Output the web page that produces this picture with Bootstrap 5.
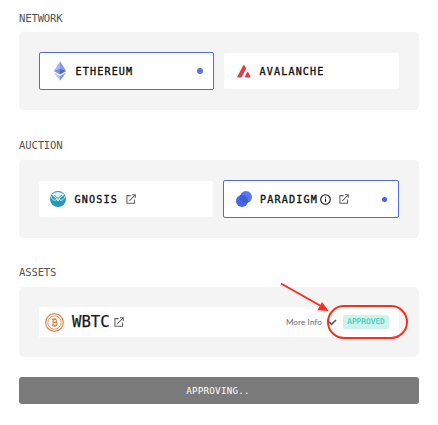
<!DOCTYPE html>
<html lang="en">
<head>
<meta charset="utf-8">
<meta name="viewport" content="width=device-width, initial-scale=1">
<title>Auction setup</title>
<link href="https://cdn.jsdelivr.net/npm/bootstrap@5.3.0/dist/css/bootstrap.min.css" rel="stylesheet">
<style>
body{font-family:"DejaVu Sans Mono","Liberation Mono",monospace;background:#fff;height:425px;overflow:hidden}
svg{display:block;flex:none}
.page{padding:0 19px;height:425px}
.field-title{font-size:10.6px;line-height:14px;letter-spacing:-.16px;color:#555;margin:0;font-weight:400;height:50px;padding-top:28px}
.field-title.first{height:32px;padding-top:11px}
.field-title.last{height:49px;padding-top:27px}
.panel{background:#f4f4f4;border-radius:5px;padding:20px}
.panel.assets{height:70px}
.choices{height:78px}
.choice{height:36px;width:174px;border-radius:2px;background:#fff;font-size:10.1px;letter-spacing:1.17px;color:#111;-webkit-text-stroke:.35px #111;line-height:14px;padding-left:11px}
.choice.chosen{height:38px;width:176px;border:1px solid #4f6de0}
.choice.avax{width:175px;padding-left:13px}
.choice.chosen.eth{width:175px;padding-left:13px}
.choice.chosen.paradigm{padding-left:12px}
.choice-name{margin-left:8.4px;padding-top:2px}
.paradigm .choice-name{margin-left:8px}
.info-icon{margin-left:1.6px}
.link-icon{margin-left:8.4px}
.asset .link-icon{margin-left:4px}
.dot{width:6px;height:6px;background:#5673e0;margin-right:10px}
.dot.deep{width:5px;height:5px;background:#4161e4;margin-right:11px}
.asset{height:30px;padding:0 10px 0 6px}
.ticker{font-size:15.6px;line-height:20px;color:#16181b;-webkit-text-stroke:.25px #16181b;margin-left:8px}
.more{font-family:Lato,"Open Sans",sans-serif;font-size:8px;letter-spacing:.16px;color:#666;line-height:12px}
.check-icon{margin-left:6px}
.tag{width:46px;height:14px;border-radius:2px;background:#cdf3ec;color:#37cdb6;font-size:7.8px;-webkit-text-stroke:.15px #37cdb6;line-height:14px;margin-left:6px}
.submit,.submit:hover{height:27px;border-radius:3px;background:#7a7a7a;color:#fff;border:0;font-size:9.2px;letter-spacing:.25px;line-height:14px;padding:1px 2px 0 0;margin-top:20px}
.annotation{pointer-events:none}
</style>
</head>
<body>
<svg width="0" height="0" class="position-absolute" aria-hidden="true">
<symbol id="ext" viewBox="0 0 10 10"><path d="M4.7 1.6H.9v7.7h7.6V5.4M3.3 6.8 9 1M6 .8h3.3v3.3" fill="none" stroke="#626262" stroke-width="1.05"/></symbol>
</svg>
<main class="page position-relative d-flex flex-column">
  <h2 class="field-title first">NETWORK</h2>
  <section class="panel choices d-flex align-items-center justify-content-between">
    <div class="choice chosen eth d-flex align-items-center">
      <svg width="14" height="20" viewBox="0 0 14 20"><path d="M7 .3.8 10 7 7.4z" fill="#a9b8f1"/><path d="M7 .3 13.2 10 7 7.4z" fill="#8398e9"/><path d="M.8 10 7 7.4v6.2z" fill="#758be5"/><path d="M13.2 10 7 7.4v6.2z" fill="#5069ce"/><path d="M.8 11.6 7 15v4.6z" fill="#b1bff5"/><path d="M13.2 11.6 7 15v4.6z" fill="#7990e5"/></svg>
      <span class="choice-name">ETHEREUM</span><i class="dot rounded-circle ms-auto"></i>
    </div>
    <div class="choice avax d-flex align-items-center">
      <svg width="14" height="13" viewBox="0 0 14 13"><path d="M6 .8q1-1.4 1.8 0l1 1.9q.4.8 0 1.6L4.8 11.7q-.4.7-1.2.7H.9q-1.1 0-.5-1z" fill="#e23b40"/><path d="M10 7.3q.7-1 1.3 0l2.1 4.1q.5 1-.6 1H8.5q-1.1 0-.5-1z" fill="#e23b40"/></svg>
      <span class="choice-name">AVALANCHE</span>
    </div>
  </section>

  <h2 class="field-title">AUCTION</h2>
  <section class="panel choices d-flex align-items-center justify-content-between">
    <div class="choice d-flex align-items-center">
      <svg width="16" height="16" viewBox="0 0 16 16"><circle cx="8" cy="8" r="8" fill="#2599b8"/><path d="M1.6 3.8Q4 .9 8 .9t6.4 2.9L8 9.2z" fill="#e8f7fa"/><path d="M4 3.9 8 7.5l4-3.6" fill="none" stroke="#2599b8" stroke-width="1"/><path d="M1 5.1c1.2 4.1 3.7 4.9 5.5 3.4L8 9.8l1.5-1.3C11.3 10 13.8 9.2 15 5.1" fill="none" stroke="#e8f7fa" stroke-width="1"/><path d="M2.2 5.2 5.7 8Q3.2 8.7 2.2 5.2zM13.8 5.2 10.3 8q2.5.7 3.5-2.8z" fill="#2599b8"/></svg>
      <span class="choice-name">GNOSIS</span>
      <svg class="link-icon" width="10" height="10"><use href="#ext"/></svg>
    </div>
    <div class="choice chosen paradigm d-flex align-items-center">
      <svg width="16" height="16" viewBox="0 0 16 16"><circle cx="10" cy="6" r="6" fill="#5b76ec"/><circle cx="6" cy="10" r="6" fill="#4369e5"/><path d="M4.1 4.3A6 6 0 0 1 11.8 11.8 6 6 0 0 1 4.1 4.3z" fill="#3d5fdc"/></svg>
      <span class="choice-name">PARADIGM</span>
      <svg class="info-icon" width="11" height="11" viewBox="0 0 11 11"><circle cx="5.5" cy="5.5" r="4.8" fill="none" stroke="#111" stroke-width="1.1"/><path d="M5.5 4.7v3.2M5.5 2.8v1" stroke="#111" stroke-width="1"/></svg>
      <svg class="link-icon" width="10" height="10"><use href="#ext"/></svg>
      <i class="dot deep rounded-circle ms-auto"></i>
    </div>
  </section>

  <h2 class="field-title last">ASSETS</h2>
  <section class="panel assets">
    <div class="asset bg-white d-flex align-items-center">
      <svg width="19" height="19" viewBox="0 0 19 19"><g fill="none" stroke="#df8a4c"><circle cx="9.5" cy="9.5" r="8.8" stroke-width="1.2"/><circle cx="9.5" cy="9.5" r="6.7" stroke-width=".9"/><path d="M7 6.4h3.1c2.1 0 2.1 2.9 0 2.9H8M7 12.5h3.3c2.4 0 2.4-3.2 0-3.2M8.1 6.4v6.1M8.9 5.2v1.2M10.4 5.2v1.2M8.9 12.5v1.2M10.4 12.5v1.2" stroke-width="1.3"/></g></svg>
      <span class="ticker">WBTC</span>
      <svg class="link-icon" width="10" height="10"><use href="#ext"/></svg>
      <span class="more ms-auto">More Info</span>
      <svg class="check-icon" width="9" height="7" viewBox="0 0 9 7"><path d="m1 2.7 2.6 2.7L8 1" fill="none" stroke="#555" stroke-width="1.6"/></svg>
      <span class="tag text-center">APPROVED</span>
    </div>
  </section>
  <button class="submit btn w-100" type="button">APPROVING..</button>
  <svg class="annotation position-absolute top-0 start-0" width="438" height="425" viewBox="0 0 438 425"><rect x="328" y="306" width="79" height="32" rx="16" fill="none" stroke="#fa2e1c" stroke-width="2"/><path d="m281 283.5 39 22" stroke="#fa2e1c" stroke-width="2"/><path d="m322 302 6.7 9-11.3-.7z" fill="#fa2e1c"/></svg>
</main>
<script src="https://cdn.jsdelivr.net/npm/bootstrap@5.3.0/dist/js/bootstrap.bundle.min.js"></script>
</body>
</html>
